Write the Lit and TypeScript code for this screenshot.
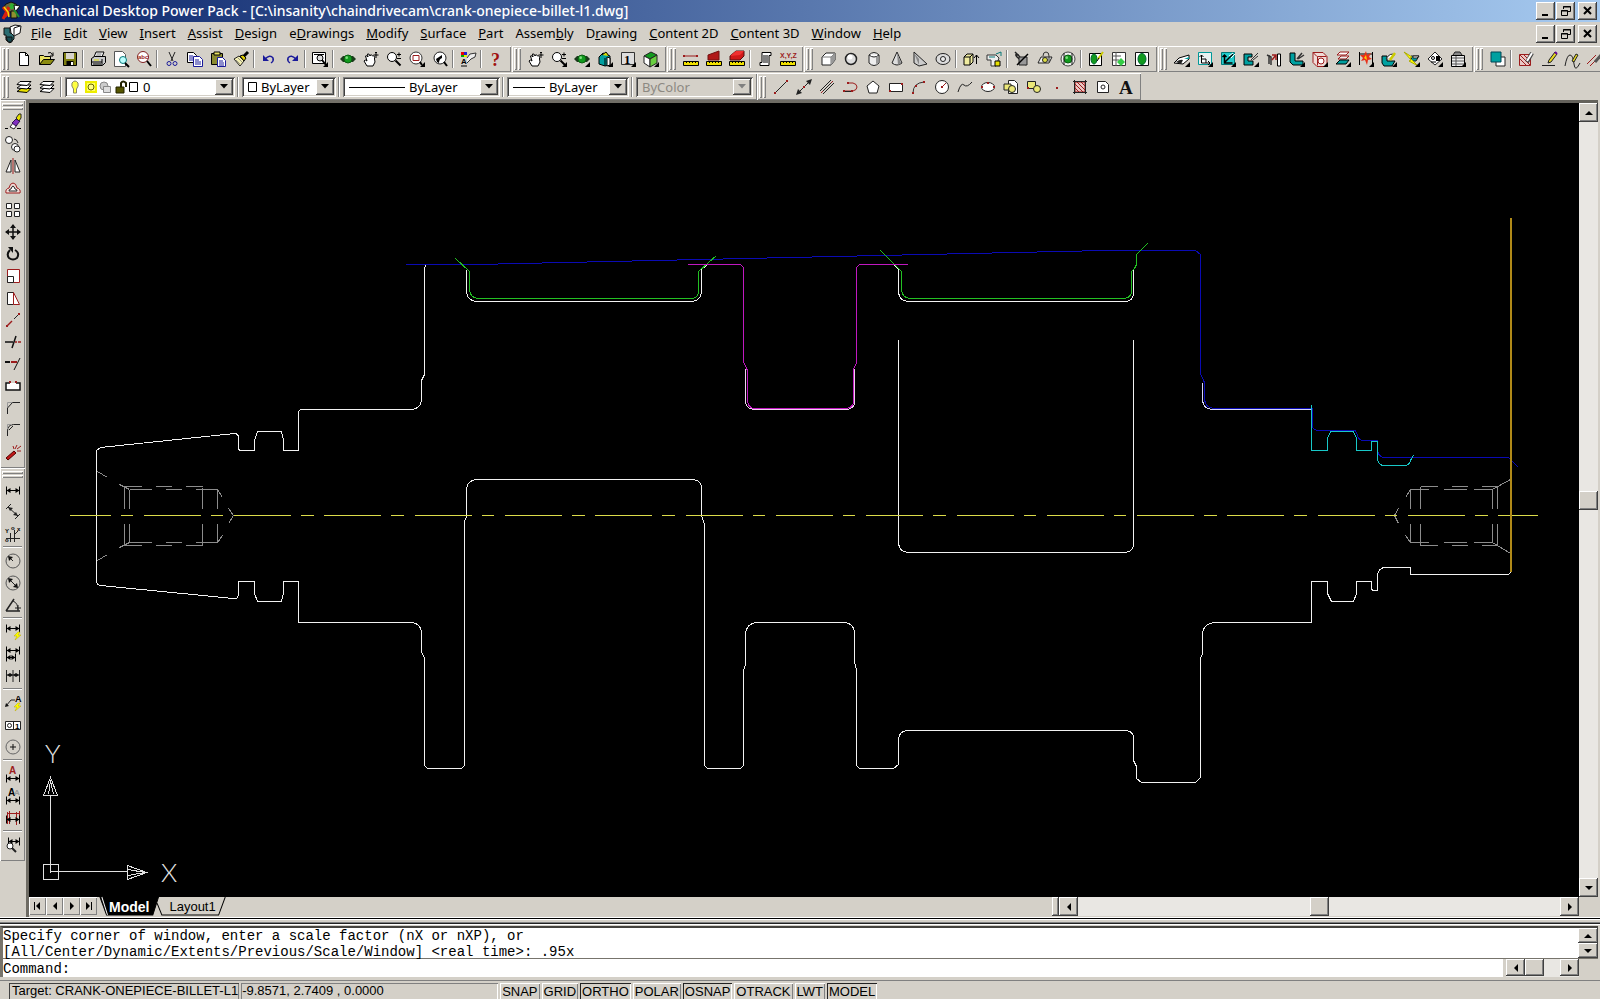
import { LitElement, html, svg, css, TemplateResult, SVGTemplateResult } from 'lit';
import { customElement, property } from 'lit/decorators.js';

type Art = SVGTemplateResult | SVGTemplateResult[];

/** Path helper: geometry, stroke, fill, stroke width. */
const p = (d: string, s = '#000', f = 'none', w = 1): SVGTemplateResult =>
  svg`<path d="${d}" stroke="${s}" fill="${f}" stroke-width="${w}"></path>`;
const o = (x: number, y: number, r: number, s = '#000', f = 'none', w = 1): SVGTemplateResult =>
  svg`<circle cx="${x}" cy="${y}" r="${r}" stroke="${s}" fill="${f}" stroke-width="${w}"></circle>`;
const t = (x: number, y: number, size: number, text: string, f = '#000', fam = 'Liberation Sans'): SVGTemplateResult =>
  svg`<text x="${x}" y="${y}" font-size="${size}" font-family="${fam}, sans-serif" font-weight="700" fill="${f}">${text}</text>`;

const N = 'none';
const RED = '#9c1c1c';
const TEAL = '#00a0a0';
const GRN = '#129a1e';
const fly = p('M16 11V16H11Z', N, '#000');
const ruler = [p('M.5 10.500h15v4H.5z', '#000', '#f0e000'), p('M3.500 11v1M6.500 11v1M9.500 11v1M12.500 11v1')];
const ball = (x: number, y: number, r: number): SVGTemplateResult[] => [
  o(x, y, r, '#0a5c10', GRN),
  o(x - r / 3, y - r / 3, r / 3, N, '#7fe07f'),
];
const orbit = [p('M0 8l3-3h10l3 3-3 3H3z', N, '#1c3a1c'), ...ball(8, 8, 4)];
const hand = [
  p('M4 15L1 10Q2 8 4 10L2.500 5Q4 4 5 6L4.500 3Q6 2 7 5Q8 2 9.500 5Q12 4 11.500 8L12 11L10 15Z', '#000', '#fff'),
  p('M13 1v6M10.500 4h5M12 2l1-1 1 1'),
];
const glass = (x: number, y: number, r: number): SVGTemplateResult[] => [
  o(x, y, r, '#000', '#fff'),
  p(`M${x + r - 1} ${y + r - 1}L${x + r + 4} ${y + r + 4}`, '#000', N, 2),
];
const plusMinus = p('M11 3.500h4M13 1.500v4M11 7.500h4');
const hDim = (y: number, a = 1.5, b = 14.5): SVGTemplateResult[] => [
  p(`M${a} ${y - 4}v8M${b} ${y - 4}v8M${a} ${y}H${b}`),
  p(`M${a} ${y}l4-2.500v5zM${b} ${y}l-4-2.500v5z`, N, '#000'),
];
const bolt = p('M13 8l-4 4h3l-2 4 6-5h-3l2-3z', '#b8a800', '#ff0', 0.5);
const pencil = [p('M14 1l2 2-6 8-3 1 1-3z', '#222', '#e8d820'), p('M14 1l2 2', '#609', N, 2)];
const sheets = (f: string): SVGTemplateResult[] => [
  p('M1 12.500l4-3h10l-4 4z', '#000', f),
  p('M1 9l4-3h10l-4 4z', '#000', '#fff'),
  p('M1 5.500l3-3h11l-4 4z', '#000', '#fff'),
];
const pdot = (x: number, y: number): SVGTemplateResult => p(`M${x - 1} ${y - 1}h2v2h-2z`, N, RED);

const ICONS: Record<string, Art> = {
  new: [p('M3.500 1.500h6l3 3v10h-9z', '#000', '#fff'), p('M9.500 1.500v3h3')],
  open: [p('M.5 13.500v-9h4l1 1h6v3', '#000', '#e8e060'), p('M.5 13.500l4-5h11l-4 5z', '#000', '#8c8c10'), p('M9 2q3-2 4.500 2M14 1.500V5h-3')],
  save: [p('M1.500 1.500h13v13h-13z', '#000', '#7d7d10'), p('M4 2h8v6H4z', N, '#d8d4cc'), p('M4.500 10h7v5h-7z', N, '#000'), p('M9 11h2v3H9z', N, '#fff')],
  print: [p('M4 6l2-5h8l-2 5', '#000', '#fff'), p('M6.500 3h5M6 5h5', '#777'), p('M1.500 7.500l3-2h11v6l-3 3h-11z', '#000', '#c9c9c9'), p('M2 11h10M3 13h8M12 8v6', '#000'), p('M4 9h5', '#dd0')],
  preview: [p('M1.500.5h8l3 3v12h-11z', '#555', '#fff'), o(10, 9, 3.5, '#087878', '#bff'), p('M12 12l4 4', '#000', N, 2)],
  find: [o(7, 6, 5.5, '#802020', '#fff'), t(2, 8, 6, 'abc', RED), p('M11 10l4 5', '#000', N, 2)],
  cut: [p('M5 1l4 9M11 1L7 10', '#222'), o(5, 12.5, 2, '#1a1a9a'), o(11, 12.5, 2, '#1a1a9a')],
  copy: [p('M.5 1.500h6l3 3v7h-9z', '#000', '#fff'), p('M2 5h4M2 7h5M2 9h5', '#1a1a9a'), p('M6.500 5.500h6l3 3v7h-9z', '#1a1a9a', '#fff'), p('M8 9h4M8 11h6M8 13h6', '#1a1a9a')],
  paste: [p('M1.500 2.500h11v11h-11z', '#000', '#8a8a30'), p('M4 1h6v3H4z', '#000', '#e8e060'), p('M7.500 6.500h5l3 3v6h-8z', '#1a1a9a', '#fff'), p('M9 10h4M9 12h5M9 14h5', '#1a1a9a')],
  brush: [p('M1 8l5-3 5 5-4 5z', '#222', '#f4efb0'), p('M3 9l4 4M5 7l4 4', '#998'), p('M7 5l3-1 3 3-2 3z', '#000', '#d8c800'), p('M11 5l4-4', '#000', N, 3)],
  undo: [p('M4 8q5-5 8-1 1 3-2 5', '#1a1a9a', N, 1.5), p('M2 4v6h6z', N, '#1a1a9a')],
  redo: [p('M12 8q-5-5-8-1-1 3 2 5', '#1a1a9a', N, 1.5), p('M14 4v6H8z', N, '#1a1a9a')],
  zoomWin: [p('M.5 1.500h13v11H.5z', '#000', '#fff'), p('M2 3.500h10', '#000'), o(8, 7, 3, '#000', '#ddd'), p('M10 9l4 5', '#000', N, 2), fly],
  orbit,
  pan: hand,
  zoom: [...glass(6, 6, 4.5), plusMinus],
  zoomBox: [o(7, 7, 6, '#333', '#fff'), p('M4 4.500h6v5H4z', RED), p('M11 11l2 3', '#000', N, 2), fly],
  zoomPrev: [o(8, 7, 6, '#222', '#fff'), p('M4 8l6-4v3q-3 1-3 5L5 11z', N, '#000'), p('M12 11l3 4', '#000', N, 2)],
  props: [p('M1 1h3v3H1z', N, '#e00'), p('M4 1h3v3H4z', N, '#2020d0'), p('M1 4h3v2H1z', N, '#0a0'), p('M4 4h3v2H4z', N, '#ee0'), t(1, 13, 8, 'A'), p('M1 15h6', '#000', N, 1), p('M7 7l3-4 6-1-1 4-4 2-4 4', '#333', '#eee')],
  help: [t(3, 15, 18, '?', '#a01010', 'Liberation Serif')],
  zoomFly: [...glass(6, 6, 4.5), plusMinus, fly],
  orbitFly: [...orbit, fly],
  bookFly: [p('M2 6l4-4 7 3v9l-5 1-6-2z', '#000', TEAL), p('M5 4l4-3 3 4', '#000', '#dd0'), p('M8 7v8', '#000'), p('M10 6l3 1v7l-3 1z', '#000', '#fff'), fly],
  oneFly: [p('M1.500 1.500h13v12h-13z', '#333', '#ddd'), t(4, 13, 13, '1', '#000', 'Liberation Serif'), fly],
  cubeFly: [p('M1 5l7-4 6 3-7 4z', '#222', GRN), p('M1 5l6 3v8l-6-4z', '#222', '#fff'), p('M7 8l7-4v8l-7 4z', '#222', '#6ad040'), fly],
  dist: [...ruler, p('M1 5h14', RED, N, 1), pdot(1, 5), pdot(14, 5)],
  area: [...ruler, p('M2 9V4l11-4v9z', '#701010', '#b01818')],
  volume: [...ruler, p('M1 9V5l6-5h8v5l-4 4z', '#501010', '#d01818'), p('M1 5l6-5h8l-4 4z', N, '#f03030')],
  list: [p('M5 1.500h9v3h-2v10H3v-3h2z', '#000', '#fff'), p('M6 5h5M6 7h5M6 9h5M6 11h5')],
  xyz: [t(0, 7, 7, 'X,Y,Z', RED), ...ruler],
  box: [p('M2 6l4-4h9v7l-4 5H2z', '#222', '#fff'), p('M11 6h-9M11 6v8M11 6l4-4', '#777'), p('M11 6l4-4v7l-4 5z', N, '#999')],
  sphere: [o(8, 8, 5.5, '#222', '#ddd', 1.5), o(7, 6, 2.5, N, '#fff')],
  cylinder: [p('M3 4q5-5 10 0v8q-5 5-10 0z', '#222', '#eee'), p('M3 4q5 4 10 0', '#222', '#fff'), p('M10 6h2.500v6l-2.500 1z', N, '#999')],
  cone: [p('M8 1l5 11q-5 4-10 0z', '#222', '#ddd'), p('M8 2l4 10-3 2z', N, '#888')],
  wedge: [p('M2 1v11l5 3 8-2z', '#222', '#ccc'), p('M2 2l5 12V8z', N, '#888')],
  torus: [svg`<ellipse cx="8" cy="8" rx="7" ry="5.5" fill="#ddd" stroke="#222"></ellipse>`, o(8, 8, 2.5, '#222', '#eee')],
  extrude: [p('M1 6l3-3h6v8l-3 3H1z', '#000', '#f0eca0'), p('M7 6H1M7 6v8M7 6l3-3'), p('M13.500 4v9M11 7l2.500-3L16 7', '#000', N, 1)],
  revolve: [p('M1 4h9l3 3-3 8H5V9H1z', '#333', '#eee'), p('M9 10h5v5H9z', '#000', '#e8e000'), p('M3 6h6M10 3l5-2v4', '#087878')],
  slice: [p('M1 1l5 5M2 5l10 9M1 4h4', '#222', N, 1.5), p('M5 6h8v8H5z', '#222', '#999'), p('M3 14l11-11', '#000', N, 1.5)],
  section: [p('M1 12l3-6h11l-3 6z', '#222', '#eee'), o(8, 9, 2.5, '#222', '#dd4'), p('M6 5q0-4 3-4t3 4v6', '#333')],
  interfere: [o(8, 8, 7, '#444', '#eee'), ...ball(8, 8, 4), p('M4 2v12M12 2v12', '#222')],
  setupDraw: [p('M1.500 2.500h12v12h-12z', '#000', '#fff'), svg`<ellipse cx="6" cy="8" rx="3" ry="5" fill="${GRN}" stroke="#063"></ellipse>`, p('M10 8l5-7', '#cc0', N, 2), p('M9 10l2-3')],
  setupView: [p('M1.500 1.500h13v13h-13z', '#333', '#fff'), p('M1 5h9M5 1v14M2 9h6', '#555'), p('M10 7l4 4-4 4-4-4z', N, '#3c4')],
  setupProfile: [p('M1.500 1.500h13v13h-13z', '#111', '#fff'), svg`<ellipse cx="8" cy="8" rx="4" ry="5.5" fill="${GRN}" stroke="#063"></ellipse>`],
  face: [p('M0 12l5-5 10-3v4L9 13z', '#000', '#fff'), p('M2 11q4-3 7-2l-2 4z', N, '#222'), p('M10 8l5-2v2z', N, TEAL), fly],
  moveFace: [p('M1.500 1.500h13v12h-13z', '#099', '#e8f0f0'), p('M4.500 4v8h8M2.500 6l2-2 2 2M11 10l2 2-2 2M5 8h4v4', '#000', '#fff', 1), fly],
  offsetFace: [p('M1.500 1.500h13v12h-13z', '#077', '#2cc'), p('M4.500 4v8h8M2.500 6l2-2 2 2M5 11l8-8', '#000', N, 1.500), p('M9 5l4-3M11 7l4-4', '#fff'), fly],
  deleteFace: [p('M1 3h8v3H5v4h5v4H1z', '#000', TEAL), p('M8 9l7-7M10 9l5-4', '#333', '#fff'), fly],
  rotateFace: [p('M1 4l4 2v8M3 4v9', '#333', N, 1.5), p('M6 9l4-5M6 4h4v5', RED, N, 1.5), p('M11.500 3h3v12h-3z', '#000', '#fff')],
  taper: [p('M1 2h5v8h8v4H4l-3-3z', '#000', TEAL), p('M8 8l5-6M9 8l6-4', '#333', N, 1.5), fly],
  copyFace: [p('M1 1.500h10l4 4v10H5l-4-4z', RED, '#f0dcd8'), p('M5.500 5.500h9M5.500 5.500v9M1 1.500l4 4', RED), o(9, 10, 3, RED, '#fff'), fly],
  colorFace: [p('M2 4l3-3h9l-3 3z', RED, '#fff'), p('M3 8l3-3h8l-3 3z', RED, '#eee'), p('M1 13l4-4h9l-3 4z', '#000', TEAL), fly],
  dimBurst: [p('M1.500 1v13M14.500 1v13M2 3h12', '#000'), p('M8 0l1 4 4-2-2 4 3 2-4 1-1 5-2-5-4 1 2-3-3-3 4 0z', N, '#e83018'), p('M8 4l1 5-3-2z', N, '#fc0'), fly],
  shell: [p('M1 5h5v5h8l-3 5H3l-2-3z', '#000', TEAL), p('M5 8q4-7 9-4', '#222', '#fff'), p('M9 9l5-7', '#cc0', N, 2.5), fly],
  imprint: [p('M7 5h8l-3 5H8z', '#222', TEAL), p('M9 5h6l-2 2H9z', '#222', '#fff'), p('M0 1l8 5-2 1 8 8-9-5 2-1z', '#aa0', '#ff0'), fly],
  check: [p('M8 1l7 7-7 6-7-6z', '#222', '#fff'), o(6, 7, 1.5, '#000'), p('M9 5h4v5H9z', N, '#000'), p('M4 11h5', '#000'), fly],
  table: [p('M1.500 4.500h13v11h-13z', '#000', '#eee'), p('M3 4l2-3h5l2 3', '#222', '#888'), p('M2 7h12M2 10h12M2 13h12M6 5v10', '#555'), fly],
  order: [p('M6 6h9v9H6z', '#222', '#fff'), p('M1 1h10v10H1z', '#045', TEAL)],
  editHatch: [p('M1.500 3.500h11v11h-11z', RED, '#e9c8c4'), p('M2 8l6 6M2 4l10 10M6 4l6 6', RED), p('M9 11l5-9', '#444', N, 4), p('M9 10l5-8', '#fff', N, 2)],
  editPline: [p('M1 14.500h13', '#222'), ...pencil],
  editSpline: [p('M1 15q2-11 5-11t4 9 6-1', '#222'), p('M8 10l4-7 2 1-4 7z', '#222', '#e8d820')],
  editMulti: [p('M0 13l9-9M3 15l9-9', RED), p('M8 11l7-8', '#555', '#fff', 3)],
  layers: [...sheets('#e8e000')],
  layersBack: [...sheets('#fff')],
  line: [p('M2 14L14 2', '#222'), pdot(2, 14), pdot(14, 2)],
  xline: [p('M2 14L14 2', '#222'), p('M0 16l2-6 4 4zM16 0l-2 6-4-4z', N, '#222'), pdot(8, 8)],
  mline: [p('M1 12L12 1M4 15L15 4M3 13L14 2', '#222'), p('M2 14l2-2M12 4l2-2', RED)],
  pline: [p('M2 12h9q4-1 4-4t-4-4H6', RED, N, 1), p('M2 12.500h9', '#222'), pdot(2, 12), pdot(10, 12), pdot(6, 4)],
  polygon: [p('M8 2l6 5-2 7H4L2 7z', '#222', '#fff')],
  rect: [p('M1.500 4.500h13v8h-13z', '#222', '#fff'), pdot(2, 12), pdot(14, 5)],
  arc: [p('M2 14Q2 4 13 3', '#333'), pdot(2, 14), pdot(5, 7), pdot(13, 3)],
  circle: [o(8, 8, 6.5, '#222', '#fff'), p('M8 8l4-4', RED), pdot(8, 8)],
  spline: [p('M1 13Q4 3 7 6T15 3', '#222')],
  ellipse: [svg`<ellipse cx="8" cy="8" rx="6.5" ry="4.5" fill="#fff" stroke="#222"></ellipse>`, pdot(2, 8), pdot(14, 8), pdot(8, 4)],
  insert: [p('M5.500 1.500h6l3 3v10h-9z', '#222', '#fff'), p('M1 5h7v6H1z', '#222', '#ece878'), o(9, 10, 3.5, '#222', '#ece878')],
  block: [p('M1.500 2.500h8v7h-8z', '#222', '#ece878'), o(11, 10, 3.5, '#222', '#ece878'), pdot(2, 9)],
  point: [pdot(8, 9)],
  hatch: [p('M3 3h10v10H3z', RED, '#e9c8c4'), p('M3 9l4 4M3 5l8 8M5 3l8 8M9 3l4 4', RED), p('M2.500 1v14M13.500 1v14M1 2.500h14M1 13.500h14', '#222')],
  region: [p('M2.500 2.500h8l3 3v8h-11z', '#222', '#fff'), o(8, 8, 2, '#222')],
  text: [t(1, 15, 19, 'A', '#111', 'Liberation Serif')],
  erase: [p('M0 14.500h3M12 14.500h4', '#000'), p('M5 13l3-4 4 2-3 4z', '#222', '#fff'), p('M7 9l4-4 4 2-4 5z', '#301050', '#8030c0'), p('M11 4l3-4h2v4l-2 3z', '#222', '#e8e000')],
  copyObj: [o(4, 4, 3.5, '#222', '#fff'), o(10, 11, 3.5, '#222', '#fff'), o(12, 13, 3, '#222', '#fff'), p('M9 3q3 0 4 4', '#222')],
  mirror: [p('M6 2v12H1z', '#222', '#fff'), p('M10 2v12h5z', '#222', '#fff'), p('M8 0v16', RED)],
  offset: [p('M1 13q-1-4 3-5 1-5 4-5t4 5q4 1 3 5z', RED, '#f0dcd8'), p('M4 11q0-2 2-2 1-3 2-3t2 3q2 0 2 2z', '#222', '#fff')],
  array: [p('M1.500 1.500h5v5h-5zM9.500 1.500h5v5h-5zM1.500 9.500h5v5h-5zM9.500 9.500h5v5h-5z', '#222', '#fff')],
  move: [p('M8 1v14M1 8h14', '#111', N, 1.5), p('M8 0l3 4H5zM8 16l3-4H5zM0 8l4-3v6zM16 8l-4-3v6z', N, '#111')],
  rotate: [p('M5 4q-4 4-1 8 4 3 8 0 3-5-2-8', '#111', N, 2), p('M3 1h5v6z', N, '#111')],
  scale: [p('M2.500 1.500h12v13h-12z', RED, '#fff'), p('M2.500 8.500h6v6h-6z', '#222', '#fff')],
  stretch: [p('M2.500 2.500h6v12h-6z', '#222', '#fff'), p('M8.500 2.500l6 12h-6z', RED, '#fff')],
  lengthen: [p('M2 14l5-5', RED, N, 1.5), p('M9 7l5-5', '#222'), pdot(2, 14), pdot(14, 2)],
  trim: [p('M0 8h8M7 14l4-12', '#111', N, 1.5), p('M10 8h2M13 8h3', RED, N, 1.5)],
  extend: [p('M0 6h5', '#111', N, 2), p('M6 6h6', RED, N, 2), p('M9 14L15 2', '#111', N, 1)],
  break: [p('M5 5H1v7h14V5h-4', '#111', '#fff', 1.500), pdot(5, 4), pdot(11, 4)],
  chamfer: [p('M2.500 14V8l5-5.500H15', '#222'), p('M2.500 7V2.500H7', '#999')],
  fillet: [p('M2.500 14V9q0-6 6-6.500H15', '#222'), p('M2.500 7V2.500H7', '#999'), p('M4 8l4-4', '#222')],
  explode: [p('M1 14l8-7 2 2-8 7z', '#500', '#c01818'), p('M10 5l2-4M12 5l4-3M12 7h4M9 5L8 2', RED)],
  dimLinear: hDim(8.5),
  dimAligned: [p('M1 5l5-5M10 15l5-5M3 3l10 9', '#222'), p('M3 3l5 1-3 3zM13 12l-5-1 3-3z', N, '#222')],
  dimOrdinate: [p('M5.500 7v9M9.500 4v12M1 12.500h14M9 9l4-4', '#222'), t(0, 7, 6, 'Y'), t(6, 4, 6, 'o'), t(12, 5, 6, 'x'), t(0, 16, 6, 'o')],
  dimRadius: [o(8, 8, 7, '#555'), p('M8 8L5 5', '#222'), p('M3 3l5 1-4 4z', N, '#111')],
  dimDiameter: [o(8, 8, 7, '#555'), p('M4 4l8 8', '#222'), p('M3 3l5 1-4 4zM13 13l-5-1 4-4z', N, '#111')],
  dimAngular: [p('M1 14h14M1 14L9 2', '#222', N, 1.500), p('M8 4q5 2 5 9', '#222'), p('M10 11h6M13 8v6', '#222')],
  quickDim: [...hDim(4.5), bolt],
  baseline: [...hDim(4.5), ...hDim(11.5, 1.5, 10.5)],
  continueDim: [p('M1.500 2v12M8 2v12M14.500 2v12M2 7h12', '#222'), p('M2 7l3-2v4zM14 7l-3-2v4zM8 7L5 5v4zM8 7l3-2v4z', N, '#111')],
  leader: [p('M1 11l5-6h4', '#222'), p('M0 12l1-4 3 3z', N, '#111'), t(10, 7, 9, 'A'), bolt],
  tolerance: [p('M.5 4.500h15v8H.5zM8.500 4.500v8', '#222', '#fff'), o(4.5, 8.5, 2, '#222'), t(10, 12, 8, '1')],
  centerMark: [o(8, 8, 7, '#666'), p('M8 5v6M5 8h6', '#111')],
  dimEdit: [t(4, 8, 10, 'A', RED), ...hDim(12.5)],
  dimTextEdit: [t(3, 8, 10, 'A'), t(9, 7, 8, 'A', '#999'), ...hDim(12.5)],
  dimUpdate: [p('M2.500 2v12M14.500 1v13M4.500 1v13M11.500 2v13M2 3.500h12', RED), ...hDim(9.5)],
  dimStyle: [...hDim(4.5, 3.5), o(5, 9, 3, '#222', '#fff'), p('M7 11l4 4', '#222', N, 2)],
};

const TOP_BARS: string[] = [
  'new open save | print preview find | cut copy paste brush | undo redo | zoomWin | orbit pan zoom zoomBox zoomPrev | props | help',
  'pan zoomFly orbitFly bookFly oneFly cubeFly',
  'dist area volume | list xyz',
  'box sphere cylinder cone wedge torus | extrude revolve | slice section interfere | setupDraw setupView setupProfile',
  'face moveFace offsetFace deleteFace rotateFace taper copyFace colorFace dimBurst shell imprint check table',
  'order | editHatch editPline editSpline editMulti',
];
const DRAW_BAR = 'line xline mline pline polygon rect arc circle spline ellipse insert block point hatch region text';
const SIDE_BARS: string[] = [
  'erase copyObj mirror offset array move rotate scale stretch lengthen trim extend break chamfer fillet explode',
  'dimLinear dimAligned dimOrdinate | dimRadius dimDiameter dimAngular | quickDim baseline continueDim | leader tolerance centerMark | dimEdit dimTextEdit dimUpdate | dimStyle',
];

/** Menu captions; the ampersand precedes the access key. */
const MENUS = ['&File', '&Edit', '&View', '&Insert', '&Assist', '&Design', 'e&Drawings', '&Modify', '&Surface', '&Part', 'Assem&bly', 'D&rawing', '&Content 2D', '&Content 3D', '&Window', '&Help'];

const MODES: [string, boolean][] = [
  ['SNAP', false], ['GRID', false], ['ORTHO', true], ['POLAR', false],
  ['OSNAP', true], ['OTRACK', false], ['LWT', false], ['MODEL', true],
];

const raised = css`
  .raised {
    box-sizing: border-box;
    display: grid;
    place-items: center;
    padding: 0;
    margin: 0;
    border: 0;
    background: #d4d0c8;
    color: #000;
    box-shadow: inset -1px -1px #404040, inset 1px 1px #fff, inset -2px -2px #808080;
  }
`;

@customElement('tool-strip')
export class ToolStrip extends LitElement {
  @property() items = '';
  @property({ type: Boolean, reflect: true }) vertical = false;

  static styles = css`
    :host { display: flex; flex: none; }
    .strip {
      display: flex;
      align-items: center;
      box-sizing: border-box;
      padding: 0 4px 0 2px;
      box-shadow: inset 1px 1px #fff, inset -1px -1px #808080;
    }
    .grip { display: flex; flex: none; gap: 1px; width: 10px; height: 22px; }
    .grip i { width: 3px; box-shadow: inset 1px 1px #fff, inset -1px -1px #808080; }
    .tool {
      display: grid;
      place-items: center;
      flex: none;
      width: 23px;
      height: 22px;
      padding: 0;
      border: 0;
      background: none;
    }
    .sep { flex: none; width: 2px; height: 18px; margin: 0 2px 0 1px; background: linear-gradient(90deg, #808080 50%, #fff 50%); }
    svg { width: 16px; height: 16px; overflow: visible; }
    :host([vertical]) .strip { flex-direction: column; width: 25px; padding: 3px 0 5px; }
    :host([vertical]) .grip { flex-direction: column; width: 21px; height: 8px; }
    :host([vertical]) .grip i { width: auto; height: 3px; }
    :host([vertical]) .sep { width: 19px; height: 2px; margin: 1px 0 2px; background: linear-gradient(#808080 50%, #fff 50%); }
  `;

  render(): TemplateResult {
    return html`<div class="strip" role="toolbar">
      <span class="grip"><i></i><i></i></span>
      ${this.items.split(' ').filter(Boolean).map((name) =>
        name === '|'
          ? html`<span class="sep"></span>`
          : html`<button class="tool" aria-label=${name}><svg viewBox="0 0 16 16">${ICONS[name]}</svg></button>`,
      )}
      <slot></slot>
    </div>`;
  }
}

@customElement('combo-box')
export class ComboBox extends LitElement {
  @property() label = '';
  @property() value = '';
  @property() kind = 'plain';
  @property({ type: Boolean, reflect: true }) disabled = false;

  static styles = [raised, css`
    :host { display: block; flex: none; }
    .box {
      position: relative;
      display: flex;
      align-items: center;
      box-sizing: border-box;
      height: 20px;
      padding: 0 20px 0 6px;
      gap: 4px;
      background: #fff;
      box-shadow: inset 1px 1px #808080, inset -1px -1px #fff, inset 2px 2px #404040, inset -2px -2px #d4d0c8;
    }
    .disabled { background: #d4d0c8; }
    select {
      flex: 1;
      min-width: 0;
      appearance: none;
      border: 0;
      padding: 0;
      background: none;
      color: #000;
      font: 13px/18px "Noto Sans", sans-serif;
      opacity: 1;
    }
    select:disabled { color: #8c8982; }
    .drop { position: absolute; right: 2px; top: 2px; width: 18px; height: 16px; pointer-events: none; }
    .art { flex: none; height: 14px; overflow: visible; }
    .state { width: 68px; }
    .swatch { width: 9px; }
    .wide { width: 56px; }
    .short { width: 32px; }
  `];

  private art(): TemplateResult | string {
    switch (this.kind) {
      case 'layer':
        return html`<svg class="art state" viewBox="0 0 68 14">
          ${p('M2.500 9Q0 6 1 3 4-1 7 3 8 6 5.500 9v4h-3z', '#886', '#ffff40')}
          ${p('M15 2h10v10H15z', '#ee0', '#ff6', 2)}${o(20, 7, 3, '#660', '#ff8')}
          ${o(33, 6, 4, '#888', '#ccc')}${p('M32.500 6.500h7v6h-7z', '#888', '#ddd')}
          ${p('M45 7h8v6h-8z', '#220', '#550')}${p('M50 7V3q2-3 5 0v4', '#220', N, 2)}
          ${p('M58.500 2.500h8v9h-8z', '#000', '#fff')}
        </svg>`;
      case 'color':
        return html`<svg class="art swatch" viewBox="0 0 9 14">${p('M.5 2.500h8v9h-8z', '#000', '#fff')}</svg>`;
      case 'wide':
        return html`<svg class="art wide" viewBox="0 0 56 14">${p('M0 7.500h56')}</svg>`;
      case 'short':
        return html`<svg class="art short" viewBox="0 0 32 14">${p('M0 7.500h32')}</svg>`;
      default:
        return '';
    }
  }

  render(): TemplateResult {
    return html`<div class="box ${this.disabled ? 'disabled' : ''}">
      ${this.art()}
      <select aria-label=${this.label} ?disabled=${this.disabled}><option>${this.value}</option></select>
      <span class="raised drop"><svg width="8" height="5" viewBox="0 0 8 5">${p('M0 0h8L4 4.500z', N, this.disabled ? '#808080' : '#000')}</svg></span>
    </div>`;
  }
}

@customElement('crank-drawing')
export class CrankDrawing extends LitElement {
  static styles = css`
    :host { display: block; min-width: 0; min-height: 0; background: #000; overflow: hidden; }
    svg { display: block; width: 100%; height: 100%; }
    .axis { font: 300 26px Lato, sans-serif; fill: #e4e4e4; }
  `;

  render(): TemplateResult {
    const white = '#f2f2f2';
    const green = '#22c022';
    const blue = '#0a0ab4';
    const pink = '#c018c0';
    const cyan = '#18c8c8';
    const hidden = '#8c8c8c';
    const line = (d: string, c: string): SVGTemplateResult => p(d, c);
    return html`<svg viewBox="29 103 1550 794" role="img" aria-label="Crankshaft profile">
      <g transform="translate(.5 .5)" shape-rendering="crispEdges">
        ${line('M426 264L424 267V374L421 380V400Q420 408 411 409H300L298 411V450H283V440L281 431H257L254 440V450H239L238 448V437Q238 433 234 433L100 447L96 450V581Q96 584 100 585L233 598Q238 599 238 593V581H254V593L257 601H281L283 593V581H298V622H411Q421 623 421 633V651L424 658V765L427 768H461L464 765V521L466 516V488Q467 480 476 479H693Q701 480 701 488V515L704 524V765L707 768H740L743 765V670L745 664V633Q746 623 756 622H844Q854 623 854 633V662L856 669V765L859 768H893L898 764V738Q899 731 906 730H1126Q1133 731 1133 738V760L1136 766V778L1141 782H1195L1200 777V658L1202 653V633Q1203 623 1214 622H1311V581H1327V593L1331 601H1353L1356 593V581H1371V589L1373 590H1377V575Q1378 567 1385 567H1410V574H1508L1511 571', white)}
        ${line('M466 269V292Q467 300 476 301H692Q700 300 701 292V269L707 264', white)}
        ${line('M894 265L898 269V292Q899 300 907 301H1126Q1133 300 1133 292V269', white)}
        ${line('M898 339V543Q899 551 907 552H1125Q1133 551 1133 543V339', white)}
        ${line('M405 264H475L1104 250H1195L1200 254V373L1204 382V399Q1205 407 1213 408H1312V427Q1314 430 1318 430H1355L1357 435Q1358 440 1363 440H1377V450Q1378 456 1383 457H1508L1518 467', blue)}
        ${line('M1202 382V400Q1203 408 1211 409H1311', '#d4d4f8')}
        ${line('M455 258L469 271V290Q470 297 477 298H692Q698 297 698 290V271L716 255', green)}
        ${line('M880 250L901 271V290Q902 297 909 298H1124Q1131 297 1131 290V271L1134 268L1136 264V254L1147 243', green)}
        ${line('M687 264H740L743 267V361L747 370V401Q748 407 753 408H846Q853 407 853 400V369L856 362V267L859 264H907', pink)}
        ${line('M745 368V402Q746 408 753 409H846Q854 408 854 402V368', '#f0d0f0')}
        ${line('M1311 404V450H1327V438L1330 431H1353L1356 438V450H1371V441H1377V459Q1378 465 1384 465H1405Q1409 464 1410 460L1413 455', cyan)}
        ${line('M97 471L107 477M119 484L129 489M97 560L107 554M119 547L129 542M124 487V508M124 523V545M129 489V508M129 523V542M202 487V508M202 523V545M217 489V508M217 523V542M124 486H141M155 486H171M185 486H202M129 489H151M165 489H181M195 489H217M124 545H141M155 545H171M185 545H202M129 542H151M165 542H181M195 542H217M217 489L222 497M228 508L233 515L228 523M217 542L222 535', hidden)}
        ${line('M1410 489V508M1410 523V542M1420 486V508M1420 523V545M1492 489V508M1492 523V542M1497 486V508M1497 523V545M1410 489H1428M1443 489H1466M1473 489H1492M1420 486H1437M1451 486H1467M1481 486H1497M1410 542H1428M1443 542H1466M1473 542H1492M1420 545H1437M1451 545H1467M1481 545H1497M1492 489L1510 479M1492 542L1510 553M1410 489L1405 497M1398 508L1394 515L1398 523M1410 542L1405 535', hidden)}
        <path d="M69 515H1537" stroke="#dcdc4a" fill="none" stroke-dasharray="57 10 12.500 10.800" stroke-dashoffset="16"></path>
        ${p('M1510.500 217V571', '#b08a18', N, 2)}
        ${line('M43 864H58V879H43ZM50 872V795M43 795H57L50 777ZM48 794L50 780L53 794M50 871H127M127 865V879L146 872ZM128 869L144 872L128 875', '#e0e0e0')}
      </g>
      <text class="axis" x="45" y="763">Y</text>
      <text class="axis" x="161" y="882">X</text>
    </svg>`;
  }
}

type Dir = 'up' | 'down' | 'left' | 'right';
const ARROWS: Record<Dir, string> = {
  up: 'M1 7h8L5 3z',
  down: 'M1 3h8L5 7z',
  left: 'M7 1v8L3 5z',
  right: 'M3 1v8l4-4z',
};
const arrow = (d: Dir): TemplateResult => html`<svg width="10" height="10" viewBox="0 0 10 10">${p(ARROWS[d], N, '#000')}</svg>`;

@customElement('app-root')
export class AppRoot extends LitElement {
  static styles = [raised, css`
    :host {
      display: flex;
      flex-direction: column;
      height: 100vh;
      overflow: hidden;
      background: #d4d0c8;
      color: #000;
      font: 13px/18px "Noto Sans", sans-serif;
    }
    button { font: inherit; }
    .title {
      display: flex;
      align-items: center;
      flex: none;
      height: 22px;
      padding: 0 3px 0 1px;
      gap: 2px;
      background: linear-gradient(90deg, #0a246a, #a6caf0);
      color: #fff;
      font-size: 14px;
      font-weight: 500;
    }
    .title h1 { flex: 1; margin: 0; font: inherit; white-space: nowrap; overflow: hidden; }
    .logo { width: 20px; height: 20px; flex: none; }
    .controls { display: flex; flex: none; }
    .controls .raised { width: 19px; height: 18px; margin-right: 1px; }
    .controls .raised:last-child { margin: 0 0 0 2px; }
    .menu { display: flex; align-items: center; flex: none; height: 23px; padding: 0 3px 0 2px; }
    .menu nav { display: flex; flex: 1; min-width: 0; padding: 0 0 2px 3px; }
    .menu nav button { padding: 0 6px; border: 0; background: none; white-space: nowrap; }
    .bars { display: flex; flex: none; height: 27px; overflow: hidden; }
    .first { height: 26px; padding: 1px 0; gap: 1px; }
    .combos { display: flex; align-items: center; }
    .sep { flex: none; width: 2px; height: 20px; margin: 0 3px 0 2px; background: linear-gradient(90deg, #808080 50%, #fff 50%); }
    .layer { width: 170px; }
    .color { width: 94px; }
    .type { width: 157px; }
    .weight { width: 122px; }
    .plot { width: 117px; }
    .main { display: flex; flex: 1; min-height: 0; }
    .side { flex: none; width: 26px; }
    .view {
      display: grid;
      grid-template: minmax(0, 1fr) 20px / minmax(0, 1fr) 19px;
      flex: 1;
      min-width: 0;
      margin-right: 2px;
      border-top: 3px solid #6a6862;
      border-left: 3px solid #6a6862;
      border-image: linear-gradient(135deg, #77746c, #5a5852) 3;
    }
    .track { display: flex; background: #e9e7e3; }
    .vertical { flex-direction: column; }
    .vertical .raised { width: 19px; height: 19px; }
    .across .raised { width: 19px; height: 19px; }
    .space { flex: 1; }
    .foot { display: flex; align-items: flex-start; min-width: 0; }
    .page { display: flex; flex: none; }
    .page button { width: 17px; height: 18px; padding: 0; border: 0; background: #d4d0c8; box-shadow: inset 1px 1px #fff, inset -1px -1px #808080; display: grid; place-items: center; }
    .tabs { display: flex; flex: 1; margin-left: 2px; }
    .tab { position: relative; height: 19px; padding: 0 10px; border: 0; background: none; font: 13px/18px "Liberation Sans", sans-serif; }
    .tab svg { position: absolute; inset: 0; width: 100%; height: 100%; overflow: visible; }
    .tab span { position: relative; }
    .active { color: #fff; font-weight: 700; font-size: 14px; }
    .hbar { display: flex; flex: none; width: 34%; }
    .split { width: 7px; height: 19px; flex: none; }
    .hbar .track { flex: 1; }
    .sash { flex: none; height: 9px; background: linear-gradient(#fff 1px, #000 1px 2px, #fff 2px 3px, #d4d0c8 3px 5px, #808080 5px 6px, #222 6px 7px, #fff 7px 8px, #d4d0c8 8px); }
    .command {
      flex: none;
      margin-right: 2px;
      border-top: 2px solid #45433f;
      border-left: 3px solid #77746c;
      font: 14px/16px "Liberation Mono", monospace;
    }
    .history { display: flex; height: 30px; background: #fff; border-bottom: 1px solid #77746c; }
    .history pre { flex: 1; margin: 0; font: inherit; }
    .history .raised { width: 20px; height: 15px; }
    .prompt { display: flex; height: 18px; margin-right: 19px; background: #fff; line-height: 20px; }
    .prompt input { flex: 1; min-width: 0; margin: 0 0 0 8px; padding: 0; border: 0; outline: 0; background: none; font: inherit; }
    .prompt .track { width: 73px; padding-left: 3px; background: linear-gradient(90deg, #d4d0c8 3px, #e9e7e3 3px); }
    .prompt .raised { width: 19px; height: 17px; }
    .status {
      display: flex;
      flex: none;
      height: 18px;
      margin-top: 3px;
      padding: 0 0 0 9px;
      gap: 2px;
      border-top: 1px solid #808080;
      border-bottom: 1px solid #fff;
      box-sizing: content-box;
      font: 13px/15px "Liberation Sans", sans-serif;
    }
    .status > * { box-sizing: border-box; flex: none; height: 16px; margin: 2px 0 0; border: 0; background: none; white-space: nowrap; }
    .cell { box-shadow: inset 1px 1px #808080, inset -1px 0 #fff; padding: 0 1px 0 3px; }
    .target { box-shadow: inset 1px 1px #404040, inset -1px 0 #808080; }
    .coords { width: 257px; padding: 0 1px; }
    .mode { padding: 0 2px; box-shadow: inset 1px 1px #fff, inset -1px 0 #808080; }
    .on { box-shadow: inset 1px 1px #222, inset -1px 0 #fff; }
  `];

  private controls(): TemplateResult {
    return html`<div class="controls">
      <button class="raised" aria-label="Minimize"><svg width="12" height="12">${p('M2 9h6v2H2z', N, '#000')}</svg></button>
      <button class="raised" aria-label="Restore"><svg width="12" height="12">${p('M3.500 4V1.500h7v5H8M3 2h8M1.500 5.500h6v5h-6zM1 6h7')}</svg></button>
      <button class="raised" aria-label="Close"><svg width="12" height="12">${p('M2 2l7 7M9 2L2 9', '#000', N, 2)}</svg></button>
    </div>`;
  }

  private menuItem(caption: string): TemplateResult {
    const at = caption.indexOf('&');
    return html`<button>${caption.slice(0, at)}<u>${caption[at + 1]}</u>${caption.slice(at + 2)}</button>`;
  }

  render(): TemplateResult {
    return html`
      <header class="title">
        <svg class="logo" viewBox="0 0 20 20">
          ${p('M5 3l5-2 5 2 3 4-4 4-8 0-4-4z', '#111', '#6a6a40')}
          ${p('M10 2l5 2-3 4-5 0z', N, '#30b030')}${p('M13 4l6 1-5 6z', '#111', '#fff')}
          ${p('M2 6l6 7M8 6l-6 12M3 16l5-4', '#d82010', N, 3)}${p('M3 6l4 5 1 5', '#ffd800', N, 1.5)}
          ${p('M10 10h6v7h-6z', '#111', '#909030')}${p('M13 9l5 7', '#209030', N, 2)}
        </svg>
        <h1>Mechanical Desktop Power Pack - [C:\\insanity\\chaindrivecam\\crank-onepiece-billet-l1.dwg]</h1>
        ${this.controls()}
      </header>
      <div class="menu">
        <svg class="logo" viewBox="0 0 20 20">
          ${p('M2 4h6v5h4v6l-4 4-4-3v-5H2z', '#111', '#2a6c70')}${p('M8 3l5-2 6 1-1 7-6 3-3-3z', '#111', '#fff')}
          ${p('M12 4l6-2M12 4v7', '#111')}${p('M4 13h6v5H6z', '#111', '#174a50')}
        </svg>
        <nav>${MENUS.map((m) => this.menuItem(m))}</nav>
        ${this.controls()}
      </div>
      <div class="bars first">${TOP_BARS.map((b) => html`<tool-strip .items=${b}></tool-strip>`)}</div>
      <div class="bars">
        <tool-strip items="layers layersBack">
          <div class="combos">
            <span class="sep"></span><combo-box class="layer" kind="layer" label="Layer" value="0"></combo-box>
            <span class="sep"></span><combo-box class="color" kind="color" label="Color" value="ByLayer"></combo-box>
            <span class="sep"></span><combo-box class="type" kind="wide" label="Linetype" value="ByLayer"></combo-box>
            <span class="sep"></span><combo-box class="weight" kind="short" label="Lineweight" value="ByLayer"></combo-box>
            <span class="sep"></span><combo-box class="plot" label="Plot style" value="ByColor" disabled></combo-box>
          </div>
        </tool-strip>
        <tool-strip .items=${DRAW_BAR}></tool-strip>
      </div>
      <main class="main">
        <div class="side">${SIDE_BARS.map((b) => html`<tool-strip vertical .items=${b}></tool-strip>`)}</div>
        <section class="view">
          <crank-drawing></crank-drawing>
          <div class="track vertical">
            <button class="raised" aria-label="Scroll up">${arrow('up')}</button>
            <span class="space"></span><span class="raised"></span><span class="space"></span>
            <button class="raised" aria-label="Scroll down">${arrow('down')}</button>
          </div>
          <div class="foot">
            <div class="page">
              <button aria-label="First"><svg width="11" height="10">${p('M8 1v8L4 5zM2 1h1v8H2z', N, '#000')}</svg></button>
              <button aria-label="Previous">${arrow('left')}</button>
              <button aria-label="Next">${arrow('right')}</button>
              <button aria-label="Last"><svg width="11" height="10">${p('M3 1v8l4-4zM8 1h1v8H8z', N, '#000')}</svg></button>
            </div>
            <div class="tabs" role="tablist">
              <button class="tab active" role="tab" aria-selected="true">
                <svg viewBox="0 0 64 18" preserveAspectRatio="none">${p('M1 0L8 17H57L63 0Z', '#000', '#000')}${p('M3 0l6 17', '#fff')}</svg><span>Model</span>
              </button>
              <button class="tab" role="tab" aria-selected="false">
                <svg viewBox="0 0 70 18" preserveAspectRatio="none">${p('M-2 6L3 17H63L70 0', '#000')}</svg><span>Layout1</span>
              </button>
            </div>
            <div class="hbar">
              <span class="raised split"></span>
              <div class="track across">
                <button class="raised" aria-label="Scroll left">${arrow('left')}</button>
                <span class="space"></span><span class="raised"></span><span class="space"></span>
                <button class="raised" aria-label="Scroll right">${arrow('right')}</button>
              </div>
            </div>
          </div>
        </section>
      </main>
      <div class="sash"></div>
      <section class="command">
        <div class="history">
          <pre>Specify corner of window, enter a scale factor (nX or nXP), or
[All/Center/Dynamic/Extents/Previous/Scale/Window] &lt;real time&gt;: .95x</pre>
          <div>
            <button class="raised" aria-label="Scroll up">${arrow('up')}</button>
            <button class="raised" aria-label="Scroll down">${arrow('down')}</button>
          </div>
        </div>
        <div class="prompt">
          <label for="cmd">Command:</label><input id="cmd" autocomplete="off" />
          <div class="track">
            <button class="raised" aria-label="Scroll left">${arrow('left')}</button>
            <span class="raised"></span><span class="space"></span>
            <button class="raised" aria-label="Scroll right">${arrow('right')}</button>
          </div>
        </div>
      </section>
      <footer class="status">
        <span class="cell target">Target: CRANK-ONEPIECE-BILLET-L1</span>
        <span class="cell coords">-9.8571, 2.7409 , 0.0000</span>
        ${MODES.map(([name, on]) => html`<button class="mode ${on ? 'on' : ''}" aria-pressed=${on ? 'true' : 'false'}>${name}</button>`)}
      </footer>
    `;
  }
}
